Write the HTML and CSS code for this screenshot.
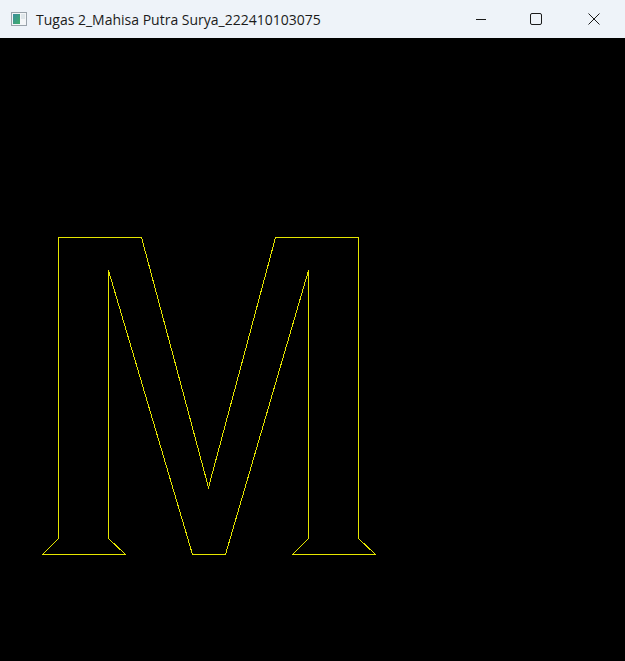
FILE: index.html
```html
<!DOCTYPE html>
<html>
<head>
<meta charset="utf-8">
<link rel="stylesheet" href="styles.css">
</head>
<body>
<div class="window">
  <header class="titlebar">
    <div class="title-left">
      <svg class="app-icon" width="16" height="14" viewBox="0 0 16 14">
        <rect x="0.5" y="0.5" width="15" height="13" fill="#f4f6f8" stroke="#9aa3ab"/>
        <defs>
          <linearGradient id="g" x1="0" y1="0" x2="1" y2="1">
            <stop offset="0" stop-color="#3c8d9e"/>
            <stop offset="1" stop-color="#3fae6a"/>
          </linearGradient>
        </defs>
        <rect x="2" y="2" width="7" height="10" fill="url(#g)"/>
        <rect x="10" y="2" width="4" height="5" fill="#dfe6ea"/>
      </svg>
      <span class="title">Tugas 2_Mahisa Putra Surya_222410103075</span>
    </div>
    <div class="controls">
      <div class="ctrl ctrl-min">
        <svg width="12" height="12" viewBox="0 0 12 12"><path d="M1 6.5H11" stroke="#1a1a1a" stroke-width="1"/></svg>
      </div>
      <div class="ctrl">
        <svg width="12" height="12" viewBox="0 0 12 12"><rect x="0.5" y="0.5" width="11" height="11" rx="1.5" fill="none" stroke="#1a1a1a" stroke-width="1"/></svg>
      </div>
      <div class="ctrl">
        <svg width="12" height="12" viewBox="0 0 12 12"><path d="M0.5 0.5L11.5 11.5M11.5 0.5L0.5 11.5" stroke="#1a1a1a" stroke-width="1"/></svg>
      </div>
    </div>
  </header>
  <main class="canvas">
    <svg class="drawing" width="625" height="623" viewBox="0 0 625 623">
      <polygon class="letter-m" points="58.5,199.5 141.5,199.5 208.5,449.5 275.5,199.5 358.5,199.5 358.5,500.5 375.5,516.5 292.5,516.5 308.5,500.5 308.5,232.5 225.5,516.5 192.5,516.5 108.5,232.5 108.5,500.5 125.5,516.5 42.5,516.5 58.5,500.5"/>
    </svg>
  </main>
</div>
</body>
</html>
```
FILE: styles.css
```css
html, body {
  margin: 0;
  padding: 0;
  width: 625px;
  height: 661px;
  overflow: hidden;
  background: #000;
}
.window {
  width: 625px;
  height: 661px;
  display: flex;
  flex-direction: column;
}
.titlebar {
  height: 38px;
  flex: 0 0 38px;
  background: #eef3f9;
  display: flex;
  align-items: center;
  justify-content: space-between;
  font-family: "Open Sans", "Noto Sans", sans-serif;
}
.title-left {
  display: flex;
  align-items: center;
  padding-left: 11px;
  gap: 9px;
}
.app-icon {
  display: block;
}
.title {
  font-size: 14px;
  color: #1b1b1b;
  letter-spacing: 0;
}
.controls {
  display: flex;
  height: 38px;
  padding-right: 2px;
}
.ctrl {
  width: 58px;
  height: 38px;
  display: flex;
  align-items: center;
  justify-content: center;
}
.ctrl-min {
  width: 48px;
  margin-right: 2px;
}
.canvas {
  flex: 1;
  background: #000;
}
.drawing {
  display: block;
}
.letter-m {
  fill: none;
  stroke: #e6e600;
  stroke-width: 1;
  shape-rendering: crispEdges;
}
```
